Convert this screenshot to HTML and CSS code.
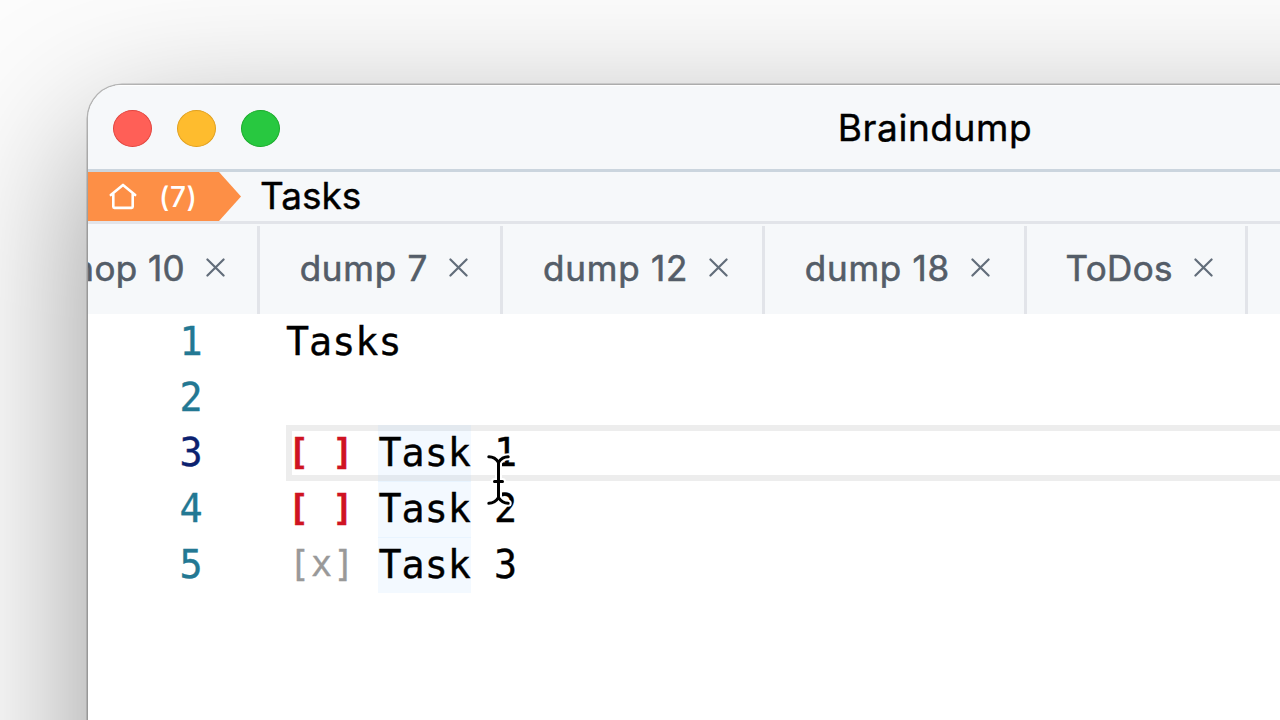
FILE: index.html
```html
<!DOCTYPE html>
<html lang="en">
<head>
<meta charset="utf-8">
<title>Braindump</title>
<link rel="stylesheet" href="styles.css">
</head>
<body>
<div class="window">
  <header class="titlebar">
    <div class="lights"><span class="light red"></span><span class="light yellow"></span><span class="light green"></span></div>
    <h1 class="title">Braindump</h1>
  </header>
  <nav class="crumbs">
    <div class="home">
      <svg class="home-icon" width="30" height="30" viewBox="0 0 30 30"><path d="M2.8 13 15 2.9 27.2 13M5.3 11.6v13.2q0 1.1 1.1 1.1h17.2q1.1 0 1.1-1.1V11.6"/></svg>
      <span class="count">(7)</span>
    </div>
    <span class="crumb">Tasks</span>
  </nav>
  <div class="tabs">
    <div class="tab first"><span>Shop 10</span><svg class="close" viewBox="0 0 20 20"><path d="M1.5 1.5l17 17M18.5 1.5l-17 17"/></svg></div>
    <div class="tab seven"><span>dump 7</span><svg class="close" viewBox="0 0 20 20"><path d="M1.5 1.5l17 17M18.5 1.5l-17 17"/></svg></div>
    <div class="tab"><span>dump 12</span><svg class="close" viewBox="0 0 20 20"><path d="M1.5 1.5l17 17M18.5 1.5l-17 17"/></svg></div>
    <div class="tab"><span>dump 18</span><svg class="close" viewBox="0 0 20 20"><path d="M1.5 1.5l17 17M18.5 1.5l-17 17"/></svg></div>
    <div class="tab todos"><span>ToDos</span><svg class="close" viewBox="0 0 20 20"><path d="M1.5 1.5l17 17M18.5 1.5l-17 17"/></svg></div>
  </div>
  <main class="editor">
    <div class="row"><span class="num">1</span><div class="line">Tasks</div></div>
    <div class="row"><span class="num">2</span><div class="line"></div></div>
    <div class="row"><span class="num active">3</span><div class="line current"><b class="box open">[ ]</b> <span class="match">Task</span> 1</div></div>
    <div class="row"><span class="num">4</span><div class="line"><b class="box open">[ ]</b> <span class="match">Task</span> 2</div></div>
    <div class="row"><span class="num">5</span><div class="line"><span class="box done">[x]</span> <span class="match">Task</span> 3</div></div>
  </main>
</div>
<svg class="cursor" width="30" height="54" viewBox="0 0 30 54">
  <path class="halo" d="M4.8 3.8Q11 3.8 14.5 9.5Q18 3.8 24.2 3.8M14.5 8.5V45.5M4.8 50.2Q11 50.2 14.5 44.5Q18 50.2 24.2 50.2M10.5 28.5H18.5"/>
  <path class="beam" d="M4.8 3.8Q11 3.8 14.5 9.5Q18 3.8 24.2 3.8M14.5 8.5V45.5M4.8 50.2Q11 50.2 14.5 44.5Q18 50.2 24.2 50.2M10.5 28.5H18.5"/>
</svg>
</body>
</html>
```
FILE: styles.css
```css
* { box-sizing: border-box; }
body {
  margin: 0;
  width: 1280px;
  height: 720px;
  overflow: hidden;
  padding: 85px 0 0 88px;
  background: #fcfcfc;
  font-family: Inter, "Liberation Sans", sans-serif;
}
.window {
  width: 1694px;
  height: 1200px;
  border-radius: 34px;
  overflow: hidden;
  background: #fff;
  box-shadow: 0 0 0 1.5px rgba(0, 0, 0, .24), 0 54px 155px rgba(0, 0, 0, .41);
}
.titlebar {
  display: grid;
  grid-template-columns: 1fr auto 1fr;
  align-items: center;
  height: 87px;
  padding: 0 25px;
  background: #f6f8fa;
  border-top: 1px solid #fff;
  border-bottom: 3px solid #cbd5de;
}
.lights { display: flex; gap: 25px; padding-top: 2px; }
.light { width: 39px; height: 37px; border-radius: 50%; border: 1px solid; }
.red { background: #ff5f57; border-color: #e2463f; }
.yellow { background: #febc2e; border-color: #e1a01f; }
.green { background: #28c840; border-color: #1bac2b; }
.title { margin: 0; font-size: 37px; font-weight: 400; line-height: 46px; padding-top: 1px; color: #000; letter-spacing: .55px; -webkit-text-stroke: .4px; }
.crumbs {
  display: flex;
  align-items: center;
  height: 52px;
  background: #f6f8fa;
  border-bottom: 3px solid #e2e4e9;
}
.home {
  display: flex;
  align-items: center;
  width: 153px;
  height: 49px;
  padding-left: 20px;
  gap: 21px;
  background: #fd8f46;
  clip-path: polygon(0 0, 131px 0, 153px 50%, 131px 100%, 0 100%);
  color: #fff;
}
.home-icon { fill: none; stroke: #fff; stroke-width: 2.6; stroke-linejoin: round; stroke-linecap: round; }
.count { font-size: 28px; font-weight: 500; letter-spacing: .6px; }
.crumb { margin-left: 19px; padding-bottom: 1px; font-size: 37px; line-height: 46px; -webkit-text-stroke: .4px; }
.tabs { display: flex; height: 90px; padding-top: 2px; background: #f6f8fa; }
.tab {
  display: flex;
  align-items: center;
  justify-content: flex-end;
  width: 262px;
  padding: 0 34px 5px 0;
  border-right: 3px solid #e2e4e9;
  font-size: 35px;
  font-weight: 400;
  letter-spacing: .75px;
  -webkit-text-stroke: .6px;
  color: #545d68;
  gap: 21px;
  white-space: nowrap;
}
.first { width: 172px; overflow: hidden; padding-right: 32px; letter-spacing: .4px; }
.seven { width: 243px; padding-right: 32px; }
.todos { width: 221px; padding-right: 32px; letter-spacing: .4px; }
.close { flex: none; width: 19px; height: 19px; fill: none; stroke: #626d7a; stroke-width: 2.3; stroke-linecap: round; }
.editor {
  font-family: "DejaVu Sans Mono", monospace;
  font-size: 38.4px;
  line-height: 55.7px;
  color: #000;
  -webkit-text-stroke: .35px;
}
.row { display: flex; height: 55.7px; }
.num { width: 114.5px; margin-right: 83.5px; text-align: right; color: #237893; }
.active { color: #0b216f; }
.line { flex: 1; white-space: pre; }
.current { box-shadow: inset 0 0 0 6px #ededed; }
.match { display: inline-block; height: 56.5px; background: rgba(173, 214, 255, .15); }
.box { display: inline-block; width: 69.3px; padding-left: 2px; font-size: 35px; letter-spacing: 1px; line-height: 54px; vertical-align: 2px; }
.open { color: #cf1322; }
.done { padding-left: 3px; color: #999; }
.cursor { position: absolute; left: 484px; top: 453px; fill: none; stroke-linecap: round; }
.halo { stroke: #fff; stroke-width: 7; }
.beam { stroke: #000; stroke-width: 3; }
```
